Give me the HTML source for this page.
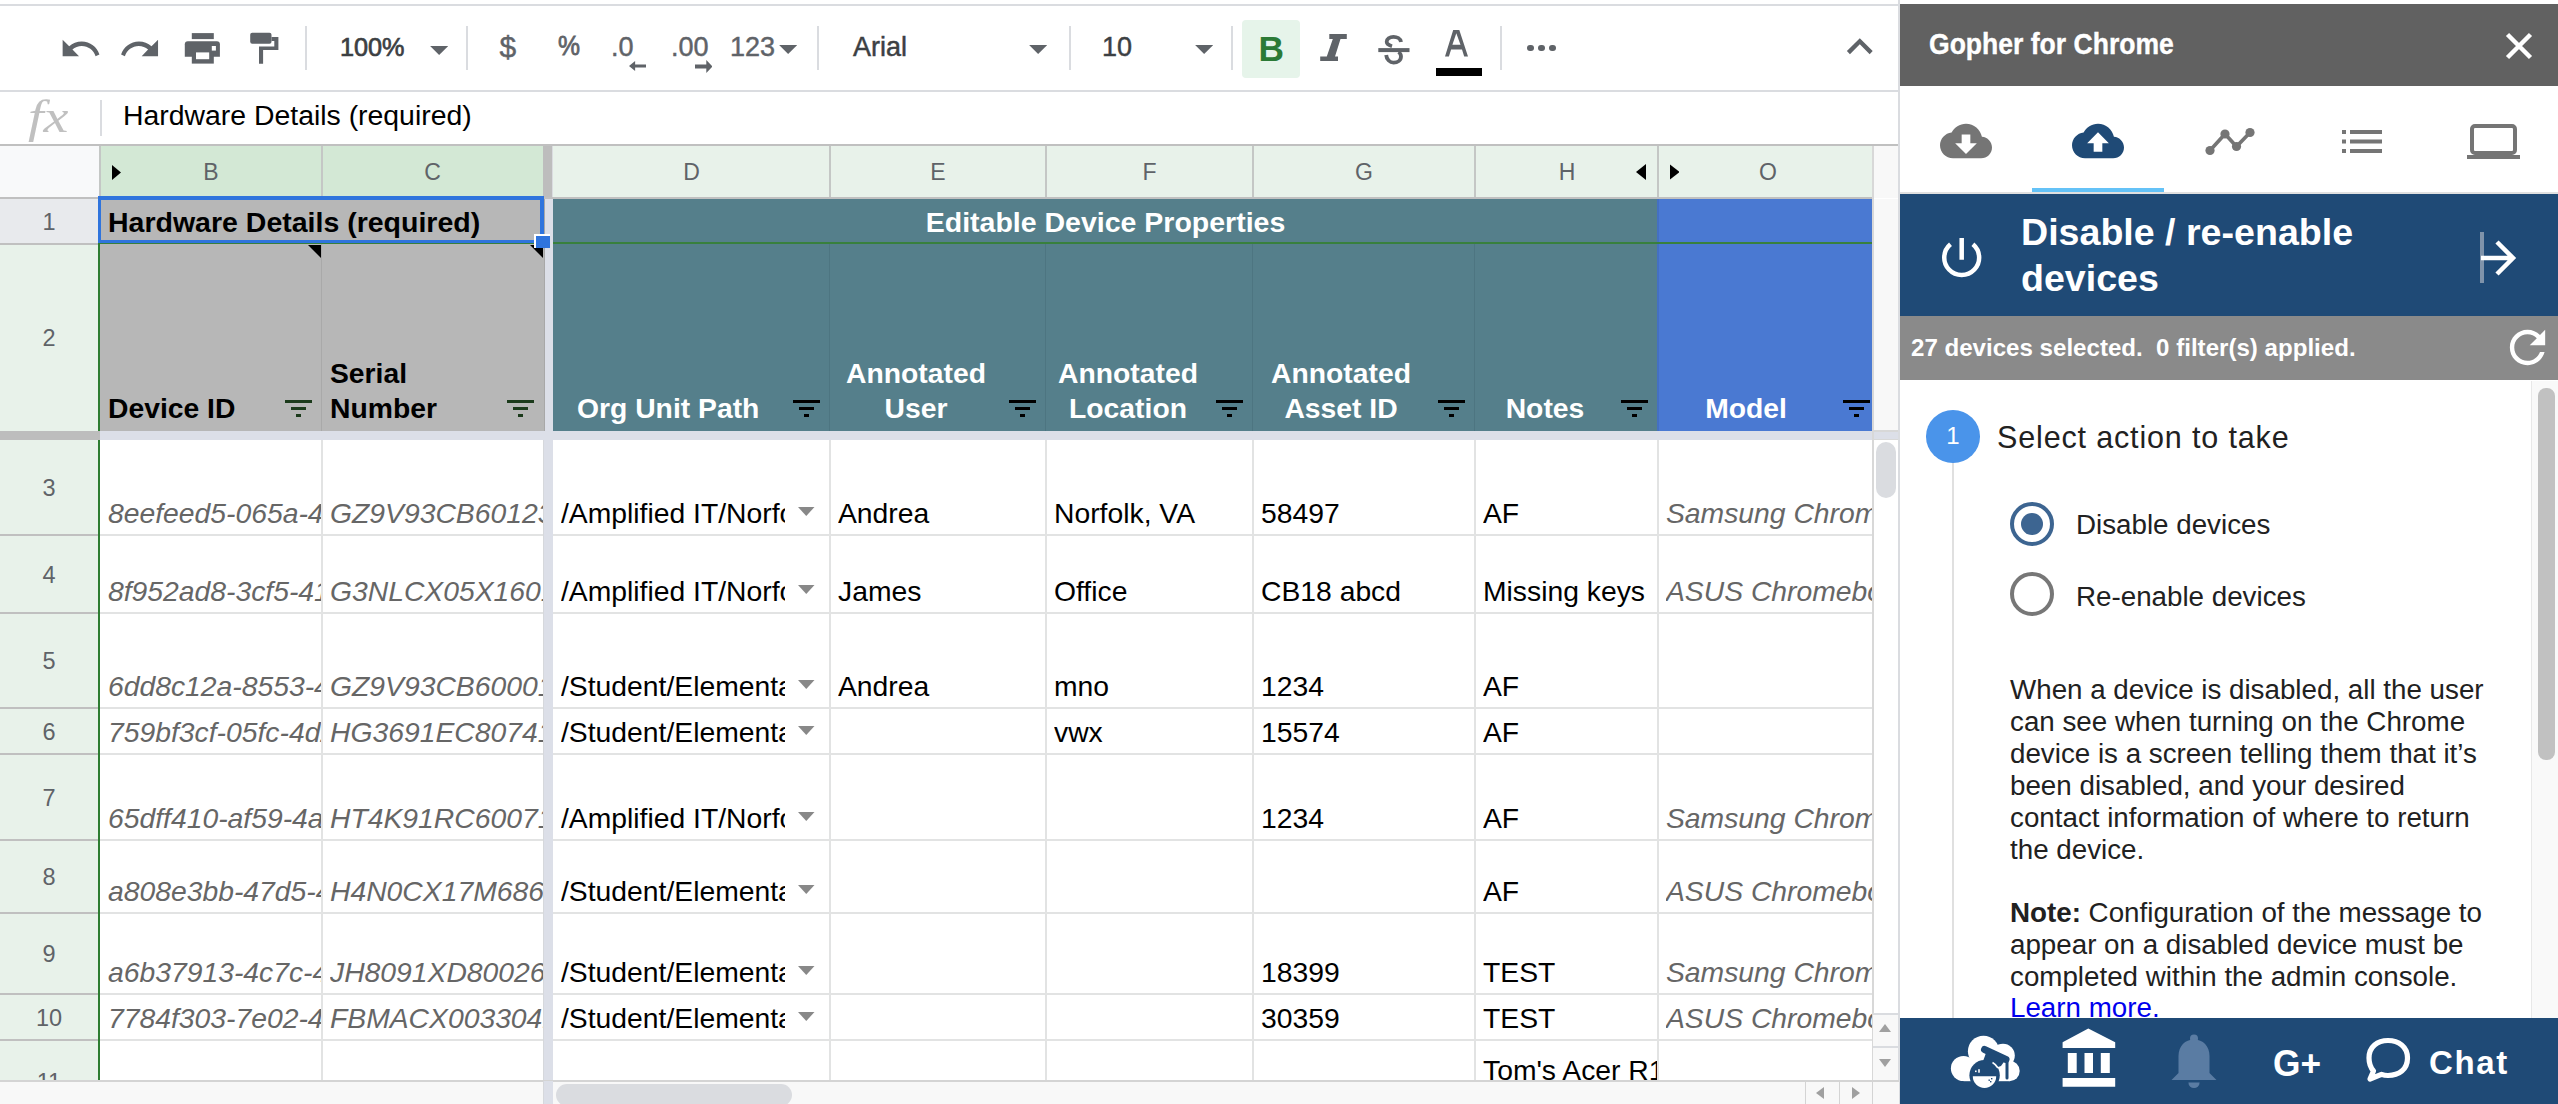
<!DOCTYPE html><html><head><meta charset="utf-8"><style>
html,body{margin:0;padding:0;}
body{width:2558px;height:1104px;overflow:hidden;position:relative;background:#fff;font-family:"Liberation Sans", sans-serif;}
div{box-sizing:border-box;}
.t{position:absolute;white-space:nowrap;line-height:1;}
.clip{position:absolute;overflow:hidden;}
svg{position:absolute;display:block;}

</style></head><body>
<div style="position:absolute;left:0px;top:4px;width:1899px;height:2px;background:#dadce0"></div>
<div style="position:absolute;left:0px;top:90px;width:1899px;height:2px;background:#dadce0"></div>
<svg style="left:58.6px;top:27.2px" width="43.7" height="43.7" viewBox="0 0 24 24"><path fill="#5f6368" d="M12.5 8c-2.65 0-5.05.99-6.9 2.6L2 7v9h9l-3.62-3.62c1.39-1.16 3.16-1.88 5.12-1.88 3.54 0 6.55 2.31 7.6 5.5l2.1-.85C20.9 11 17.15 8 12.5 8z"/></svg>
<svg style="left:118.4px;top:26.7px" width="43.7" height="43.7" viewBox="0 0 24 24"><path fill="#5f6368" d="M18.4 10.6C16.55 8.99 14.15 8 11.5 8c-4.65 0-8.4 3-9.8 7.15l2.1.85c1.05-3.19 4.05-5.5 7.6-5.5 1.95 0 3.73.72 5.12 1.88L13 16h9V7l-3.6 3.6z"/></svg>
<svg style="left:182px;top:30px" width="40" height="36" viewBox="0 0 40 36"><g fill="#5f6368"><rect x="9.8" y="3.1" width="22" height="6"/><path d="M2.8 14.2Q2.8 11.2 5.8 11.2H34.9Q37.9 11.2 37.9 14.2V26.7H2.8z"/><rect x="9.8" y="22.1" width="22" height="11.5"/></g><g fill="#fff"><rect x="14" y="22.4" width="13.2" height="6.8"/><rect x="29.8" y="16" width="4.1" height="4.6"/></g></svg>
<svg style="left:248px;top:30px" width="34" height="36" viewBox="0 0 34 36"><g fill="#5f6368"><rect x="2.2" y="2.8" width="21.3" height="10.9" rx="2"/><path d="M23.5 7H30.4V20H15.1V33.8H11V16.5H26.3V11H23.5z"/></g></svg>
<div style="position:absolute;left:305px;top:26px;width:2px;height:44px;background:#dadce0"></div>
<div style="position:absolute;left:466px;top:26px;width:2px;height:44px;background:#dadce0"></div>
<div style="position:absolute;left:817px;top:26px;width:2px;height:44px;background:#dadce0"></div>
<div style="position:absolute;left:1069px;top:26px;width:2px;height:44px;background:#dadce0"></div>
<div style="position:absolute;left:1231px;top:26px;width:2px;height:44px;background:#dadce0"></div>
<div style="position:absolute;left:1500px;top:26px;width:2px;height:44px;background:#dadce0"></div>
<div style="position:absolute;left:340px;top:33px;white-space:nowrap;font-size:26.3px;color:#3c4043;transform:scaleX(0.96);transform-origin:0 0;line-height:28px;-webkit-text-stroke:0.45px currentColor;-webkit-text-stroke:0.7px #3c4043">100%</div>
<svg style="left:430px;top:45.6px" width="18.3" height="9" viewBox="0 0 10 5"><path fill="#5f6368" d="M0 0h10L5 5z"/></svg>
<div style="position:absolute;left:499.5px;top:33px;white-space:nowrap;font-size:30px;color:#5f6368;line-height:28px;-webkit-text-stroke:0.45px currentColor">$</div>
<div style="position:absolute;left:557.5px;top:32px;white-space:nowrap;font-size:27.5px;color:#5f6368;transform:scaleX(0.9);transform-origin:0 0;line-height:28px;-webkit-text-stroke:0.45px currentColor;-webkit-text-stroke:0.8px #5f6368">%</div>
<div style="position:absolute;left:611px;top:33px;white-space:nowrap;font-size:27px;color:#5f6368;line-height:28px;-webkit-text-stroke:0.45px currentColor">.0</div>
<svg style="left:628.8px;top:61.3px" width="17.5" height="10" viewBox="0 0 20 13" preserveAspectRatio="none"><path fill="#5f6368" d="M7 0L0 6.5 7 13V8.5h13v-4H7z"/></svg>
<div style="position:absolute;left:671px;top:33px;white-space:nowrap;font-size:27px;color:#5f6368;line-height:28px;-webkit-text-stroke:0.45px currentColor">.00</div>
<svg style="left:694.6px;top:59.5px" width="17.4" height="13" viewBox="0 0 20 13" preserveAspectRatio="none"><path fill="#5f6368" d="M13 0l7 6.5L13 13V8.5H0v-4h13z"/></svg>
<div style="position:absolute;left:730px;top:33px;white-space:nowrap;font-size:27px;color:#5f6368;line-height:28px;-webkit-text-stroke:0.45px currentColor">123</div>
<svg style="left:779px;top:44.5px" width="18.3" height="9" viewBox="0 0 10 5"><path fill="#5f6368" d="M0 0h10L5 5z"/></svg>
<div style="position:absolute;left:853px;top:33px;white-space:nowrap;font-size:27px;color:#3c4043;line-height:28px;-webkit-text-stroke:0.45px currentColor">Arial</div>
<svg style="left:1029px;top:44.5px" width="18.3" height="9" viewBox="0 0 10 5"><path fill="#5f6368" d="M0 0h10L5 5z"/></svg>
<div style="position:absolute;left:1102px;top:33px;white-space:nowrap;font-size:27px;color:#3c4043;line-height:28px;-webkit-text-stroke:0.45px currentColor">10</div>
<svg style="left:1195px;top:45px" width="18.3" height="9" viewBox="0 0 10 5"><path fill="#5f6368" d="M0 0h10L5 5z"/></svg>
<div style="position:absolute;left:1242px;top:20px;width:58px;height:58px;background:#e6f4ea;border-radius:4px"></div>
<div class="t" style="left:1258.5px;top:31.32px;font-size:35.3px;color:#2b7a36;font-weight:bold">B</div>
<svg style="left:1318px;top:32px" width="32" height="32" viewBox="0 0 32 32"><path fill="#5f6368" d="M11.3 2.1H28.8V7H22.5L17 24.5H20V28.9H2.2V24.5H8.8L14.8 7H11.3z"/></svg>
<svg style="left:1376px;top:32px" width="36" height="34" viewBox="0 0 36 34"><g fill="none" stroke="#5f6368" stroke-width="3.8"><path d="M25 10C24.5 6.5 21 4.9 17.5 4.9C13.5 4.9 10.7 7 10.7 9.8C10.7 12.3 13 13.3 16 14.2"/><path d="M10.2 23C10.5 27.5 14 30.6 17.6 30.6C21.5 30.6 25 28.5 25 24.5C25 22.5 24 21 22.5 20"/></g><rect x="2.3" y="16.1" width="31.2" height="4" fill="#5f6368"/></svg>
<svg style="left:1440px;top:28px" width="34" height="32" viewBox="0 0 34 32"><path fill="#5f6368" fill-rule="evenodd" d="M13.2 2H19.3L28 28.5H24.2L22 21.4H11.1L8.9 28.5H5zM12.4 16.8H20.5L16.3 5.3z"/></svg>
<div style="position:absolute;left:1436px;top:68px;width:46px;height:8px;background:#000"></div>
<div style="position:absolute;left:1527px;top:44.7px;width:6.8px;height:6.8px;background:#5f6368;border-radius:50%"></div>
<div style="position:absolute;left:1538px;top:44.7px;width:6.8px;height:6.8px;background:#5f6368;border-radius:50%"></div>
<div style="position:absolute;left:1549px;top:44.7px;width:6.8px;height:6.8px;background:#5f6368;border-radius:50%"></div>
<svg style="left:1834.2px;top:21.4px" width="51.6" height="51.6" viewBox="0 0 24 24"><path fill="#5f6368" d="M12 8l-6 6 1.41 1.41L12 10.83l4.59 4.58L18 14z"/></svg>
<div style="position:absolute;left:28px;top:91.5px;white-space:nowrap;font-family:'Liberation Serif',serif;font-size:46px;color:#c0c0c0;line-height:50px;transform:scaleX(1.22);transform-origin:0 0"><i>fx</i></div>
<div style="position:absolute;left:100px;top:100px;width:2px;height:36px;background:#dadce0"></div>
<div style="position:absolute;left:123px;top:99px;white-space:nowrap;font-size:28.4px;color:#000;line-height:32px">Hardware Details (required)</div>
<div style="position:absolute;left:0px;top:144px;width:1899px;height:2px;background:#c0c0c0"></div>
<div style="position:absolute;left:0px;top:146px;width:100px;height:52px;background:#f8f9fa"></div>
<div style="position:absolute;left:100px;top:146px;width:443px;height:52px;background:#d3e8d5"></div>
<div style="position:absolute;left:543px;top:146px;width:9px;height:52px;background:#bdbdbd"></div>
<div style="position:absolute;left:552px;top:146px;width:1px;height:52px;background:#dadce0"></div>
<div style="position:absolute;left:553px;top:146px;width:1320px;height:52px;background:#e8f2ea"></div>
<div style="position:absolute;left:1873px;top:146px;width:26px;height:52px;background:#f8f8f8"></div>
<div style="position:absolute;left:99px;top:146px;width:2px;height:52px;background:#c4c7c5"></div>
<div style="position:absolute;left:321px;top:146px;width:2px;height:52px;background:#c4c7c5"></div>
<div style="position:absolute;left:829px;top:146px;width:2px;height:52px;background:#c4c7c5"></div>
<div style="position:absolute;left:1045px;top:146px;width:2px;height:52px;background:#c4c7c5"></div>
<div style="position:absolute;left:1252px;top:146px;width:2px;height:52px;background:#c4c7c5"></div>
<div style="position:absolute;left:1474px;top:146px;width:2px;height:52px;background:#c4c7c5"></div>
<div style="position:absolute;left:1657px;top:146px;width:2px;height:52px;background:#c4c7c5"></div>
<div style="position:absolute;left:0px;top:197px;width:1873px;height:2px;background:#c0c0c0"></div>
<div class="t" style="left:171.0px;width:80px;top:161px;text-align:center;font-size:23px;color:#5f6368;line-height:23px">B</div>
<div class="t" style="left:392.5px;width:80px;top:161px;text-align:center;font-size:23px;color:#5f6368;line-height:23px">C</div>
<div class="t" style="left:651.5px;width:80px;top:161px;text-align:center;font-size:23px;color:#5f6368;line-height:23px">D</div>
<div class="t" style="left:898.0px;width:80px;top:161px;text-align:center;font-size:23px;color:#5f6368;line-height:23px">E</div>
<div class="t" style="left:1109.5px;width:80px;top:161px;text-align:center;font-size:23px;color:#5f6368;line-height:23px">F</div>
<div class="t" style="left:1324.0px;width:80px;top:161px;text-align:center;font-size:23px;color:#5f6368;line-height:23px">G</div>
<div class="t" style="left:1527px;width:80px;top:161px;text-align:center;font-size:23px;color:#5f6368;line-height:23px">H</div>
<div class="t" style="left:1728px;width:80px;top:161px;text-align:center;font-size:23px;color:#5f6368;line-height:23px">O</div>
<svg style="left:112px;top:165px" width="9" height="15" viewBox="0 0 10 16" preserveAspectRatio="none"><path fill="#000" d="M0 0l10 8-10 8z"/></svg>
<svg style="left:1636px;top:164px" width="10" height="16" viewBox="0 0 10 16"><path fill="#000" d="M10 0L0 8l10 8z"/></svg>
<svg style="left:1669.5px;top:164px" width="9.5" height="16" viewBox="0 0 10 16"><path fill="#000" d="M0 0l10 8-10 8z"/></svg>
<div style="position:absolute;left:0px;top:199px;width:100px;height:44px;background:#e8eaed"></div>
<div style="position:absolute;left:0px;top:243px;width:100px;height:188px;background:#e8f2ea"></div>
<div style="position:absolute;left:0px;top:243px;width:98px;height:2px;background:#c0c0c0"></div>
<div class="t" style="left:0;width:98px;text-align:center;top:211px;font-size:23.5px;color:#5f6368;line-height:23px">1</div>
<div class="t" style="left:0;width:98px;text-align:center;top:327px;font-size:23.5px;color:#5f6368;line-height:23px">2</div>
<div style="position:absolute;left:100px;top:199px;width:444px;height:232px;background:#b7b7b7"></div>
<div style="position:absolute;left:544px;top:199px;width:1px;height:232px;background:#a8a8a8"></div>
<div style="position:absolute;left:321px;top:243px;width:1px;height:188px;background:#a9a9a9"></div>
<div style="position:absolute;left:545px;top:199px;width:8px;height:241px;background:#dcdfe8"></div>
<div style="position:absolute;left:553px;top:199px;width:1105px;height:232px;background:#557f8b"></div>
<div style="position:absolute;left:1658px;top:199px;width:215px;height:232px;background:#4a79d2"></div>
<div style="position:absolute;left:829px;top:244px;width:1px;height:187px;background:#4d7581"></div>
<div style="position:absolute;left:1045px;top:244px;width:1px;height:187px;background:#4d7581"></div>
<div style="position:absolute;left:1252px;top:244px;width:1px;height:187px;background:#4d7581"></div>
<div style="position:absolute;left:1474px;top:244px;width:1px;height:187px;background:#4d7581"></div>
<div style="position:absolute;left:1657px;top:199px;width:2px;height:232px;background:#4470c2"></div>
<div style="position:absolute;left:553px;top:242px;width:1320px;height:2px;background:#38803d"></div>
<div style="position:absolute;left:98px;top:242px;width:447px;height:2px;background:#38803d"></div>
<div style="position:absolute;left:98px;top:243px;width:2px;height:188px;background:#2e7d32"></div>
<div style="position:absolute;left:108px;top:204.6px;white-space:nowrap;font-size:28.5px;font-weight:bold;color:#000;line-height:34px">Hardware Details (required)</div>
<div class="t" style="left:553px;width:1105px;text-align:center;top:204.6px;font-size:28.5px;font-weight:bold;color:#fff;line-height:34px">Editable Device Properties</div>
<div style="position:absolute;left:108px;top:391px;white-space:nowrap;font-size:28.3px;font-weight:bold;line-height:35px;color:#000">Device ID</div>
<div style="position:absolute;left:330px;top:356px;white-space:nowrap;font-size:28.3px;font-weight:bold;line-height:35px;color:#000">Serial<br>Number</div>
<div style="position:absolute;left:577px;top:391px;white-space:nowrap;font-size:28.3px;font-weight:bold;line-height:35px;color:#fff">Org Unit Path</div>
<div class="t" style="left:830px;width:172px;text-align:center;top:356px;font-size:28.3px;font-weight:bold;line-height:35px;color:#fff">Annotated<br>User</div>
<div class="t" style="left:1046px;width:164px;text-align:center;top:356px;font-size:28.3px;font-weight:bold;line-height:35px;color:#fff">Annotated<br>Location</div>
<div class="t" style="left:1253px;width:176px;text-align:center;top:356px;font-size:28.3px;font-weight:bold;line-height:35px;color:#fff">Annotated<br>Asset ID</div>
<div class="t" style="left:1475px;width:140px;text-align:center;top:391px;font-size:28.3px;font-weight:bold;line-height:35px;color:#fff">Notes</div>
<div class="t" style="left:1658px;width:176px;text-align:center;top:391px;font-size:28.3px;font-weight:bold;line-height:35px;color:#fff">Model</div>
<div style="position:absolute;left:285px;top:400px;width:27px;height:3px;background:#1b3a1b"></div><div style="position:absolute;left:291px;top:407px;width:15px;height:3px;background:#1b3a1b"></div><div style="position:absolute;left:296px;top:414px;width:5px;height:3px;background:#1b3a1b"></div>
<div style="position:absolute;left:507px;top:400px;width:27px;height:3px;background:#1b3a1b"></div><div style="position:absolute;left:513px;top:407px;width:15px;height:3px;background:#1b3a1b"></div><div style="position:absolute;left:518px;top:414px;width:5px;height:3px;background:#1b3a1b"></div>
<div style="position:absolute;left:793px;top:400px;width:27px;height:3px;background:#000"></div><div style="position:absolute;left:799px;top:407px;width:15px;height:3px;background:#000"></div><div style="position:absolute;left:804px;top:414px;width:5px;height:3px;background:#000"></div>
<div style="position:absolute;left:1009px;top:400px;width:27px;height:3px;background:#000"></div><div style="position:absolute;left:1015px;top:407px;width:15px;height:3px;background:#000"></div><div style="position:absolute;left:1020px;top:414px;width:5px;height:3px;background:#000"></div>
<div style="position:absolute;left:1216px;top:400px;width:27px;height:3px;background:#000"></div><div style="position:absolute;left:1222px;top:407px;width:15px;height:3px;background:#000"></div><div style="position:absolute;left:1227px;top:414px;width:5px;height:3px;background:#000"></div>
<div style="position:absolute;left:1438px;top:400px;width:27px;height:3px;background:#000"></div><div style="position:absolute;left:1444px;top:407px;width:15px;height:3px;background:#000"></div><div style="position:absolute;left:1449px;top:414px;width:5px;height:3px;background:#000"></div>
<div style="position:absolute;left:1621px;top:400px;width:27px;height:3px;background:#000"></div><div style="position:absolute;left:1627px;top:407px;width:15px;height:3px;background:#000"></div><div style="position:absolute;left:1632px;top:414px;width:5px;height:3px;background:#000"></div>
<div style="position:absolute;left:1843px;top:400px;width:27px;height:3px;background:#000"></div><div style="position:absolute;left:1849px;top:407px;width:15px;height:3px;background:#000"></div><div style="position:absolute;left:1854px;top:414px;width:5px;height:3px;background:#000"></div>
<svg style="left:308px;top:245px" width="13" height="13" viewBox="0 0 13 13"><path fill="#000" d="M0 0h13v13z"/></svg>
<svg style="left:530px;top:245px" width="13" height="13" viewBox="0 0 13 13"><path fill="#000" d="M0 0h13v13z"/></svg>
<div style="position:absolute;left:98px;top:196px;width:446px;height:4px;background:#2f74dd"></div>
<div style="position:absolute;left:98px;top:196px;width:3px;height:47px;background:#2f74dd"></div>
<div style="position:absolute;left:540px;top:196px;width:4px;height:47px;background:#2f74dd"></div>
<div style="position:absolute;left:98px;top:240px;width:446px;height:3px;background:#2f74dd"></div>
<div style="position:absolute;left:534px;top:234px;width:16px;height:14px;background:#fff"></div>
<div style="position:absolute;left:536px;top:236px;width:14px;height:12px;background:#2f74dd"></div>
<div style="position:absolute;left:0px;top:431px;width:100px;height:9px;background:#bdbdbd"></div>
<div style="position:absolute;left:100px;top:431px;width:1773px;height:9px;background:#dcdfe8"></div>
<div style="position:absolute;left:0px;top:440px;width:98px;height:641px;background:#e8f2ea"></div>
<div style="position:absolute;left:98px;top:440px;width:2px;height:641px;background:#2e7d32"></div>
<div style="position:absolute;left:0px;top:534px;width:98px;height:2px;background:#c0c0c0"></div>
<div style="position:absolute;left:100px;top:534px;width:443px;height:2px;background:#e2e3e3"></div>
<div style="position:absolute;left:553px;top:534px;width:1320px;height:2px;background:#e2e3e3"></div>
<div class="t" style="left:0;width:98px;text-align:center;top:477.0px;font-size:23.5px;color:#5f6368;line-height:23px">3</div>
<div style="position:absolute;left:0px;top:612px;width:98px;height:2px;background:#c0c0c0"></div>
<div style="position:absolute;left:100px;top:612px;width:443px;height:2px;background:#e2e3e3"></div>
<div style="position:absolute;left:553px;top:612px;width:1320px;height:2px;background:#e2e3e3"></div>
<div class="t" style="left:0;width:98px;text-align:center;top:563.5px;font-size:23.5px;color:#5f6368;line-height:23px">4</div>
<div style="position:absolute;left:0px;top:707px;width:98px;height:2px;background:#c0c0c0"></div>
<div style="position:absolute;left:100px;top:707px;width:443px;height:2px;background:#e2e3e3"></div>
<div style="position:absolute;left:553px;top:707px;width:1320px;height:2px;background:#e2e3e3"></div>
<div class="t" style="left:0;width:98px;text-align:center;top:650.0px;font-size:23.5px;color:#5f6368;line-height:23px">5</div>
<div style="position:absolute;left:0px;top:753px;width:98px;height:2px;background:#c0c0c0"></div>
<div style="position:absolute;left:100px;top:753px;width:443px;height:2px;background:#e2e3e3"></div>
<div style="position:absolute;left:553px;top:753px;width:1320px;height:2px;background:#e2e3e3"></div>
<div class="t" style="left:0;width:98px;text-align:center;top:720.5px;font-size:23.5px;color:#5f6368;line-height:23px">6</div>
<div style="position:absolute;left:0px;top:839px;width:98px;height:2px;background:#c0c0c0"></div>
<div style="position:absolute;left:100px;top:839px;width:443px;height:2px;background:#e2e3e3"></div>
<div style="position:absolute;left:553px;top:839px;width:1320px;height:2px;background:#e2e3e3"></div>
<div class="t" style="left:0;width:98px;text-align:center;top:786.5px;font-size:23.5px;color:#5f6368;line-height:23px">7</div>
<div style="position:absolute;left:0px;top:912px;width:98px;height:2px;background:#c0c0c0"></div>
<div style="position:absolute;left:100px;top:912px;width:443px;height:2px;background:#e2e3e3"></div>
<div style="position:absolute;left:553px;top:912px;width:1320px;height:2px;background:#e2e3e3"></div>
<div class="t" style="left:0;width:98px;text-align:center;top:866.0px;font-size:23.5px;color:#5f6368;line-height:23px">8</div>
<div style="position:absolute;left:0px;top:993px;width:98px;height:2px;background:#c0c0c0"></div>
<div style="position:absolute;left:100px;top:993px;width:443px;height:2px;background:#e2e3e3"></div>
<div style="position:absolute;left:553px;top:993px;width:1320px;height:2px;background:#e2e3e3"></div>
<div class="t" style="left:0;width:98px;text-align:center;top:943.0px;font-size:23.5px;color:#5f6368;line-height:23px">9</div>
<div style="position:absolute;left:0px;top:1039px;width:98px;height:2px;background:#c0c0c0"></div>
<div style="position:absolute;left:100px;top:1039px;width:443px;height:2px;background:#e2e3e3"></div>
<div style="position:absolute;left:553px;top:1039px;width:1320px;height:2px;background:#e2e3e3"></div>
<div class="t" style="left:0;width:98px;text-align:center;top:1006.5px;font-size:23.5px;color:#5f6368;line-height:23px">10</div>
<div style="position:absolute;left:0px;top:1080px;width:98px;height:2px;background:#c0c0c0"></div>
<div style="position:absolute;left:100px;top:1080px;width:443px;height:2px;background:#e2e3e3"></div>
<div style="position:absolute;left:553px;top:1080px;width:1320px;height:2px;background:#e2e3e3"></div>
<div class="clip" style="left:0;top:1040px;width:98px;height:40px"><div class="t" style="left:0;width:98px;text-align:center;top:1049.0px;font-size:23.5px;color:#5f6368;line-height:23px"></div></div>
<div class="clip" style="left:0;top:1041px;width:98px;height:39px"><div class="t" style="left:0;width:98px;text-align:center;top:30px;font-size:23.5px;color:#5f6368;line-height:23px">11</div></div>
<div style="position:absolute;left:321px;top:440px;width:2px;height:641px;background:#e2e3e3"></div>
<div style="position:absolute;left:829px;top:440px;width:2px;height:641px;background:#e2e3e3"></div>
<div style="position:absolute;left:1045px;top:440px;width:2px;height:641px;background:#e2e3e3"></div>
<div style="position:absolute;left:1252px;top:440px;width:2px;height:641px;background:#e2e3e3"></div>
<div style="position:absolute;left:1474px;top:440px;width:2px;height:641px;background:#e2e3e3"></div>
<div style="position:absolute;left:1657px;top:440px;width:2px;height:641px;background:#e2e3e3"></div>
<div style="position:absolute;left:543px;top:440px;width:1px;height:641px;background:#d6d8dc"></div>
<div style="position:absolute;left:544px;top:440px;width:9px;height:641px;background:#dcdfe8"></div>
<div style="position:absolute;left:1872px;top:146px;width:2px;height:935px;background:#d8d8d8"></div>
<div style="position:absolute;left:1874px;top:199px;width:24px;height:232px;background:#f8f8f8"></div>
<div style="position:absolute;left:1874px;top:430px;width:24px;height:10px;background:#dcdfe8;border-top:2px solid #d8d8d8;border-bottom:1px solid #d8d8d8"></div>
<div class="clip" style="left:108px;top:441px;width:213px;height:93px"><div class="t" style="left:0px;top:58.04px;font-size:28.3px;font-style:italic;color:#666">8eefeed5-065a-4d2c</div></div>
<div class="clip" style="left:330px;top:441px;width:213px;height:93px"><div class="t" style="left:0px;top:58.04px;font-size:28.3px;font-style:italic;color:#666">GZ9V93CB601234</div></div>
<div class="clip" style="left:561px;top:441px;width:224px;height:93px"><div class="t" style="left:0px;top:58.04px;font-size:28.3px;color:#000">/Amplified IT/Norfolk</div></div>
<div class="clip" style="left:838px;top:441px;width:207px;height:93px"><div class="t" style="left:0px;top:58.04px;font-size:28.3px;color:#000">Andrea</div></div>
<div class="clip" style="left:1054px;top:441px;width:198px;height:93px"><div class="t" style="left:0px;top:58.04px;font-size:28.3px;color:#000">Norfolk, VA</div></div>
<div class="clip" style="left:1261px;top:441px;width:213px;height:93px"><div class="t" style="left:0px;top:58.04px;font-size:28.3px;color:#000">58497</div></div>
<div class="clip" style="left:1483px;top:441px;width:174px;height:93px"><div class="t" style="left:0px;top:58.04px;font-size:28.3px;color:#000">AF</div></div>
<div class="clip" style="left:1666px;top:441px;width:206px;height:93px"><div class="t" style="left:0px;top:58.04px;font-size:28.3px;font-style:italic;color:#666">Samsung Chromebook</div></div>
<svg style="left:798.4px;top:506.6px" width="16.5" height="9" viewBox="0 0 10 5.5" preserveAspectRatio="none"><path fill="#888" d="M0 0h10L5 5.5z"/></svg>
<div class="clip" style="left:108px;top:536px;width:213px;height:76px"><div class="t" style="left:0px;top:41.04px;font-size:28.3px;font-style:italic;color:#666">8f952ad8-3cf5-41ab</div></div>
<div class="clip" style="left:330px;top:536px;width:213px;height:76px"><div class="t" style="left:0px;top:41.04px;font-size:28.3px;font-style:italic;color:#666">G3NLCX05X16012</div></div>
<div class="clip" style="left:561px;top:536px;width:224px;height:76px"><div class="t" style="left:0px;top:41.04px;font-size:28.3px;color:#000">/Amplified IT/Norfolk</div></div>
<div class="clip" style="left:838px;top:536px;width:207px;height:76px"><div class="t" style="left:0px;top:41.04px;font-size:28.3px;color:#000">James</div></div>
<div class="clip" style="left:1054px;top:536px;width:198px;height:76px"><div class="t" style="left:0px;top:41.04px;font-size:28.3px;color:#000">Office</div></div>
<div class="clip" style="left:1261px;top:536px;width:213px;height:76px"><div class="t" style="left:0px;top:41.04px;font-size:28.3px;color:#000">CB18 abcd</div></div>
<div class="clip" style="left:1483px;top:536px;width:174px;height:76px"><div class="t" style="left:0px;top:41.04px;font-size:28.3px;color:#000">Missing keys</div></div>
<div class="clip" style="left:1666px;top:536px;width:206px;height:76px"><div class="t" style="left:0px;top:41.04px;font-size:28.3px;font-style:italic;color:#666">ASUS Chromebook</div></div>
<svg style="left:798.4px;top:584.6px" width="16.5" height="9" viewBox="0 0 10 5.5" preserveAspectRatio="none"><path fill="#888" d="M0 0h10L5 5.5z"/></svg>
<div class="clip" style="left:108px;top:614px;width:213px;height:93px"><div class="t" style="left:0px;top:58.04px;font-size:28.3px;font-style:italic;color:#666">6dd8c12a-8553-4c1e</div></div>
<div class="clip" style="left:330px;top:614px;width:213px;height:93px"><div class="t" style="left:0px;top:58.04px;font-size:28.3px;font-style:italic;color:#666">GZ9V93CB600012</div></div>
<div class="clip" style="left:561px;top:614px;width:224px;height:93px"><div class="t" style="left:0px;top:58.04px;font-size:28.3px;color:#000">/Student/Elementary</div></div>
<div class="clip" style="left:838px;top:614px;width:207px;height:93px"><div class="t" style="left:0px;top:58.04px;font-size:28.3px;color:#000">Andrea</div></div>
<div class="clip" style="left:1054px;top:614px;width:198px;height:93px"><div class="t" style="left:0px;top:58.04px;font-size:28.3px;color:#000">mno</div></div>
<div class="clip" style="left:1261px;top:614px;width:213px;height:93px"><div class="t" style="left:0px;top:58.04px;font-size:28.3px;color:#000">1234</div></div>
<div class="clip" style="left:1483px;top:614px;width:174px;height:93px"><div class="t" style="left:0px;top:58.04px;font-size:28.3px;color:#000">AF</div></div>
<svg style="left:798.4px;top:679.6px" width="16.5" height="9" viewBox="0 0 10 5.5" preserveAspectRatio="none"><path fill="#888" d="M0 0h10L5 5.5z"/></svg>
<div class="clip" style="left:108px;top:709px;width:213px;height:44px"><div class="t" style="left:0px;top:9.04px;font-size:28.3px;font-style:italic;color:#666">759bf3cf-05fc-4d2a</div></div>
<div class="clip" style="left:330px;top:709px;width:213px;height:44px"><div class="t" style="left:0px;top:9.04px;font-size:28.3px;font-style:italic;color:#666">HG3691EC807412</div></div>
<div class="clip" style="left:561px;top:709px;width:224px;height:44px"><div class="t" style="left:0px;top:9.04px;font-size:28.3px;color:#000">/Student/Elementary</div></div>
<div class="clip" style="left:1054px;top:709px;width:198px;height:44px"><div class="t" style="left:0px;top:9.04px;font-size:28.3px;color:#000">vwx</div></div>
<div class="clip" style="left:1261px;top:709px;width:213px;height:44px"><div class="t" style="left:0px;top:9.04px;font-size:28.3px;color:#000">15574</div></div>
<div class="clip" style="left:1483px;top:709px;width:174px;height:44px"><div class="t" style="left:0px;top:9.04px;font-size:28.3px;color:#000">AF</div></div>
<svg style="left:798.4px;top:725.6px" width="16.5" height="9" viewBox="0 0 10 5.5" preserveAspectRatio="none"><path fill="#888" d="M0 0h10L5 5.5z"/></svg>
<div class="clip" style="left:108px;top:755px;width:213px;height:84px"><div class="t" style="left:0px;top:49.04px;font-size:28.3px;font-style:italic;color:#666">65dff410-af59-4a1b</div></div>
<div class="clip" style="left:330px;top:755px;width:213px;height:84px"><div class="t" style="left:0px;top:49.04px;font-size:28.3px;font-style:italic;color:#666">HT4K91RC600712</div></div>
<div class="clip" style="left:561px;top:755px;width:224px;height:84px"><div class="t" style="left:0px;top:49.04px;font-size:28.3px;color:#000">/Amplified IT/Norfolk</div></div>
<div class="clip" style="left:1261px;top:755px;width:213px;height:84px"><div class="t" style="left:0px;top:49.04px;font-size:28.3px;color:#000">1234</div></div>
<div class="clip" style="left:1483px;top:755px;width:174px;height:84px"><div class="t" style="left:0px;top:49.04px;font-size:28.3px;color:#000">AF</div></div>
<div class="clip" style="left:1666px;top:755px;width:206px;height:84px"><div class="t" style="left:0px;top:49.04px;font-size:28.3px;font-style:italic;color:#666">Samsung Chromebook</div></div>
<svg style="left:798.4px;top:811.6px" width="16.5" height="9" viewBox="0 0 10 5.5" preserveAspectRatio="none"><path fill="#888" d="M0 0h10L5 5.5z"/></svg>
<div class="clip" style="left:108px;top:841px;width:213px;height:71px"><div class="t" style="left:0px;top:36.04px;font-size:28.3px;font-style:italic;color:#666">a808e3bb-47d5-4e2c</div></div>
<div class="clip" style="left:330px;top:841px;width:213px;height:71px"><div class="t" style="left:0px;top:36.04px;font-size:28.3px;font-style:italic;color:#666">H4N0CX17M68612</div></div>
<div class="clip" style="left:561px;top:841px;width:224px;height:71px"><div class="t" style="left:0px;top:36.04px;font-size:28.3px;color:#000">/Student/Elementary</div></div>
<div class="clip" style="left:1483px;top:841px;width:174px;height:71px"><div class="t" style="left:0px;top:36.04px;font-size:28.3px;color:#000">AF</div></div>
<div class="clip" style="left:1666px;top:841px;width:206px;height:71px"><div class="t" style="left:0px;top:36.04px;font-size:28.3px;font-style:italic;color:#666">ASUS Chromebook</div></div>
<svg style="left:798.4px;top:884.6px" width="16.5" height="9" viewBox="0 0 10 5.5" preserveAspectRatio="none"><path fill="#888" d="M0 0h10L5 5.5z"/></svg>
<div class="clip" style="left:108px;top:914px;width:213px;height:79px"><div class="t" style="left:0px;top:44.04px;font-size:28.3px;font-style:italic;color:#666">a6b37913-4c7c-4f1d</div></div>
<div class="clip" style="left:330px;top:914px;width:213px;height:79px"><div class="t" style="left:0px;top:44.04px;font-size:28.3px;font-style:italic;color:#666">JH8091XD800261</div></div>
<div class="clip" style="left:561px;top:914px;width:224px;height:79px"><div class="t" style="left:0px;top:44.04px;font-size:28.3px;color:#000">/Student/Elementary</div></div>
<div class="clip" style="left:1261px;top:914px;width:213px;height:79px"><div class="t" style="left:0px;top:44.04px;font-size:28.3px;color:#000">18399</div></div>
<div class="clip" style="left:1483px;top:914px;width:174px;height:79px"><div class="t" style="left:0px;top:44.04px;font-size:28.3px;color:#000">TEST</div></div>
<div class="clip" style="left:1666px;top:914px;width:206px;height:79px"><div class="t" style="left:0px;top:44.04px;font-size:28.3px;font-style:italic;color:#666">Samsung Chromebook</div></div>
<svg style="left:798.4px;top:965.6px" width="16.5" height="9" viewBox="0 0 10 5.5" preserveAspectRatio="none"><path fill="#888" d="M0 0h10L5 5.5z"/></svg>
<div class="clip" style="left:108px;top:995px;width:213px;height:44px"><div class="t" style="left:0px;top:9.04px;font-size:28.3px;font-style:italic;color:#666">7784f303-7e02-4b1a</div></div>
<div class="clip" style="left:330px;top:995px;width:213px;height:44px"><div class="t" style="left:0px;top:9.04px;font-size:28.3px;font-style:italic;color:#666">FBMACX00330412</div></div>
<div class="clip" style="left:561px;top:995px;width:224px;height:44px"><div class="t" style="left:0px;top:9.04px;font-size:28.3px;color:#000">/Student/Elementary</div></div>
<div class="clip" style="left:1261px;top:995px;width:213px;height:44px"><div class="t" style="left:0px;top:9.04px;font-size:28.3px;color:#000">30359</div></div>
<div class="clip" style="left:1483px;top:995px;width:174px;height:44px"><div class="t" style="left:0px;top:9.04px;font-size:28.3px;color:#000">TEST</div></div>
<div class="clip" style="left:1666px;top:995px;width:206px;height:44px"><div class="t" style="left:0px;top:9.04px;font-size:28.3px;font-style:italic;color:#666">ASUS Chromebook</div></div>
<svg style="left:798.4px;top:1011.6px" width="16.5" height="9" viewBox="0 0 10 5.5" preserveAspectRatio="none"><path fill="#888" d="M0 0h10L5 5.5z"/></svg>
<div class="clip" style="left:1483px;top:1041px;width:174px;height:39px"><div class="t" style="left:0px;top:15.04px;font-size:28.3px;color:#000">Tom's Acer R11</div></div>
<div style="position:absolute;left:1874px;top:440px;width:24px;height:641px;background:#fff"></div>
<div style="position:absolute;left:1876px;top:442px;width:20px;height:56px;background:#dadce0;border-radius:10px"></div>
<div style="position:absolute;left:1873px;top:1013px;width:26px;height:68px;background:#f8f8f8"></div>
<div style="position:absolute;left:1873px;top:1013px;width:26px;height:2px;background:#dadce0"></div>
<div style="position:absolute;left:1873px;top:1046px;width:26px;height:2px;background:#dadce0"></div>
<svg style="left:1879px;top:1024px" width="12" height="8" viewBox="0 0 12 8"><path fill="#a0a0a0" d="M0 8L6 0l6 8z"/></svg>
<svg style="left:1879px;top:1059px" width="12" height="8" viewBox="0 0 12 8"><path fill="#a0a0a0" d="M0 0l6 8 6-8z"/></svg>
<div style="position:absolute;left:1898px;top:0px;width:2px;height:1104px;background:#dadce0"></div>
<div style="position:absolute;left:0px;top:1081px;width:1899px;height:23px;background:#f8f8f8"></div>
<div style="position:absolute;left:0px;top:1080px;width:1899px;height:2px;background:#d4d4d4"></div>
<div style="position:absolute;left:543px;top:1081px;width:1px;height:23px;background:#d6d8dc"></div>
<div style="position:absolute;left:544px;top:1081px;width:9px;height:23px;background:#dcdfe8"></div>
<div style="position:absolute;left:556px;top:1084px;width:236px;height:22px;background:#dadce0;border-radius:11px"></div>
<div style="position:absolute;left:1805px;top:1082px;width:1px;height:22px;background:#d4d4d4"></div>
<div style="position:absolute;left:1839px;top:1082px;width:1px;height:22px;background:#d4d4d4"></div>
<div style="position:absolute;left:1872px;top:1082px;width:1px;height:22px;background:#d4d4d4"></div>
<svg style="left:1816px;top:1087px" width="8" height="12" viewBox="0 0 8 12"><path fill="#a0a0a0" d="M8 0L0 6l8 6z"/></svg>
<svg style="left:1852px;top:1087px" width="8" height="12" viewBox="0 0 8 12"><path fill="#a0a0a0" d="M0 0l8 6-8 6z"/></svg>
<div style="position:absolute;left:1900px;top:0px;width:658px;height:1104px;background:#fff"></div>
<div style="position:absolute;left:1900px;top:4px;width:658px;height:82px;background:#616161"></div>
<div class="t" style="left:1929px;top:28.61px;font-size:30px;font-weight:bold;color:#fff;transform:scaleX(0.885);transform-origin:0 0;-webkit-text-stroke:0.4px #fff">Gopher for Chrome</div>
<svg style="left:2502px;top:29px" width="34" height="34" viewBox="0 0 34 34"><path stroke="#fff" stroke-width="4.5" d="M5.5 5.5L28.5 28.5M28.5 5.5L5.5 28.5"/></svg>
<svg style="left:1940px;top:115px" width="52" height="52" viewBox="0 0 24 24"><path fill="#757575" d="M19.35 10.04C18.67 6.59 15.64 4 12 4 9.11 4 6.6 5.64 5.35 8.04 2.34 8.36 0 10.91 0 14c0 3.31 2.69 6 6 6h13c2.76 0 5-2.24 5-5 0-2.64-2.05-4.78-4.65-4.96zM17 13l-5 5-5-5h3V9h4v4h3z" fill-rule="evenodd"/></svg>
<svg style="left:2072px;top:115px" width="52" height="52" viewBox="0 0 24 24"><path fill="#1f4a76" d="M19.35 10.04C18.67 6.59 15.64 4 12 4 9.11 4 6.6 5.64 5.35 8.04 2.34 8.36 0 10.91 0 14c0 3.31 2.69 6 6 6h13c2.76 0 5-2.24 5-5 0-2.64-2.05-4.78-4.65-4.96zM14 13v4h-4v-4H7l5-5 5 5h-3z" fill-rule="evenodd"/></svg>
<svg style="left:2204px;top:126px" width="52" height="32" viewBox="0 0 52 32"><polyline fill="none" stroke="#757575" stroke-width="3.6" points="6,24.5 21,8 32.5,20.5 46,6.5"/><circle cx="6" cy="24.5" r="4.6" fill="#757575"/><circle cx="21" cy="8" r="4.6" fill="#757575"/><circle cx="32.5" cy="20.5" r="4.6" fill="#757575"/><circle cx="46" cy="6.5" r="4.6" fill="#757575"/></svg>
<svg style="left:2342px;top:130px" width="40" height="23" viewBox="0 0 40 23"><path fill="#757575" d="M0 0h4v4H0zM0 9.5h4v4H0zM0 19h4v4H0zM8 0h32v4H8zM8 9.5h32v4H8zM8 19h32v4H8z"/></svg>
<svg style="left:2467px;top:124px" width="53" height="36" viewBox="0 0 53 36"><rect x="5" y="2" width="43" height="27" rx="3" fill="none" stroke="#757575" stroke-width="4"/><rect x="0" y="31" width="53" height="4" fill="#757575"/></svg>
<div style="position:absolute;left:2032px;top:188px;width:132px;height:4px;background:#64c2f7"></div>
<div style="position:absolute;left:1900px;top:192px;width:658px;height:2px;background:#e0e0e0"></div>
<div style="position:absolute;left:1900px;top:194px;width:658px;height:122px;background:#1f4a76"></div>
<svg style="left:1937px;top:233px" width="50" height="50" viewBox="0 0 50 50"><path fill="none" stroke="#fff" stroke-width="4.5" d="M13.5 11.23A17.45 17.45 0 1 0 35.9 11.23M24.7 4.9V26.8"/></svg>
<div class="t" style="left:2021px;top:214.17px;font-size:37.6px;font-weight:bold;color:#fff">Disable / re-enable</div>
<div class="t" style="left:2021px;top:259.67px;font-size:37.6px;font-weight:bold;color:#fff">devices</div>
<div style="position:absolute;left:2480px;top:232px;width:4px;height:51px;background:#7f93aa"></div>
<svg style="left:2480px;top:238px" width="40" height="40" viewBox="0 0 40 40"><path fill="none" stroke="#fff" stroke-width="4.5" d="M1 20H33M17 4L33 20 17 36"/></svg>
<div style="position:absolute;left:1900px;top:316px;width:658px;height:64px;background:#8a8a8a"></div>
<div class="t" style="left:1911px;top:335.60px;font-size:24.1px;font-weight:bold;color:#fff">27 devices selected.&nbsp; 0 filter(s) applied.</div>
<svg style="left:2501px;top:321px" width="53" height="53" viewBox="0 0 24 24"><path fill="#fff" d="M17.65 6.35C16.2 4.9 14.21 4 12 4c-4.42 0-7.99 3.58-7.99 8s3.57 8 7.99 8c3.73 0 6.84-2.55 7.73-6h-2.08c-.82 2.33-3.04 4-5.65 4-3.31 0-6-2.69-6-6s2.69-6 6-6c1.66 0 3.14.69 4.22 1.78L13 11h7V4l-2.35 2.35z"/></svg>
<div style="position:absolute;left:2531px;top:381px;width:27px;height:637px;background:#f9f9f9;border-left:1px solid #e8e8e8"></div>
<div style="position:absolute;left:2538px;top:388px;width:17px;height:372px;background:#c1c1c1;border-radius:8px"></div>
<div style="position:absolute;left:1952px;top:462px;width:2px;height:556px;background:#e0e0e0"></div>
<div style="position:absolute;left:1926px;top:410px;width:54px;height:52.5px;background:#4a94ea;border-radius:50%"></div>
<div class="t" style="left:1926px;width:54px;text-align:center;top:424.2px;font-size:24px;color:#fff">1</div>
<div class="t" style="left:1997px;top:422.18px;font-size:30.5px;color:#212121;letter-spacing:0.85px">Select action to take</div>
<div style="position:absolute;left:2010px;top:502px;width:44px;height:44px;border:4px solid #3d6591;border-radius:50%"></div>
<div style="position:absolute;left:2021px;top:513px;width:22px;height:22px;background:#3d6591;border-radius:50%"></div>
<div class="t" style="left:2076px;top:510.51px;font-size:27.75px;color:#212121">Disable devices</div>
<div style="position:absolute;left:2010px;top:572px;width:44px;height:44px;border:4px solid #777;border-radius:50%"></div>
<div class="t" style="left:2076px;top:582.51px;font-size:27.75px;color:#212121">Re-enable devices</div>
<div class="t" style="left:2010px;top:676.11px;font-size:27.75px;color:#212121">When a device is disabled, all the user</div>
<div class="t" style="left:2010px;top:708.06px;font-size:27.75px;color:#212121">can see when turning on the Chrome</div>
<div class="t" style="left:2010px;top:740.01px;font-size:27.75px;color:#212121">device is a screen telling them that it&#8217;s</div>
<div class="t" style="left:2010px;top:771.96px;font-size:27.75px;color:#212121">been disabled, and your desired</div>
<div class="t" style="left:2010px;top:803.91px;font-size:27.75px;color:#212121">contact information of where to return</div>
<div class="t" style="left:2010px;top:835.86px;font-size:27.75px;color:#212121">the device.</div>
<div class="t" style="left:2010px;top:898.81px;font-size:27.75px;color:#212121"><b>Note:</b> Configuration of the message to</div>
<div class="t" style="left:2010px;top:930.76px;font-size:27.75px;color:#212121">appear on a disabled device must be</div>
<div class="t" style="left:2010px;top:962.71px;font-size:27.75px;color:#212121">completed within the admin console.</div>
<div class="clip" style="left:2000px;top:990px;width:300px;height:26.5px"><div class="t" style="left:10px;top:3.51px;font-size:27.75px;color:#0000ee"><span style="text-decoration:underline">Learn more.</span></div></div>
<div style="position:absolute;left:1900px;top:1018px;width:658px;height:86px;background:#1f4a76"></div>
<svg style="left:1940px;top:1024px" width="90" height="70" viewBox="0 0 90 70">
<g fill="#fff"><circle cx="23.5" cy="44.5" r="12.6"/><circle cx="43.5" cy="27.3" r="15.6"/><circle cx="63" cy="31.5" r="11.8"/><circle cx="69.5" cy="47" r="10.2"/><rect x="23.5" y="36" width="46" height="21.2"/></g>
<g fill="#1f4a76">
<path d="M44.5 25.5L66 35.5" stroke="#1f4a76" stroke-width="7" stroke-linecap="round"/>
<path d="M46 29L66 35 61 42 52 45 42 40z"/>
<circle cx="44.6" cy="51.2" r="15.2"/>
<path d="M67 35V54" stroke="#1f4a76" stroke-width="3" stroke-linecap="round"/>
</g>
<path fill="#fff" d="M32.8 52.2H56.2A11.7 11.7 0 0 1 32.8 52.2z"/>
<path fill="none" stroke="#fff" stroke-width="1.6" d="M52.5 38.5Q56 40.5 58 44"/>
<g fill="#fff"><rect x="35" y="46.5" width="1.6" height="1.6"/><rect x="38.2" y="45.2" width="1.6" height="3.5"/></g>
<g fill="#1f4a76"><rect x="48.5" y="55.5" width="1.4" height="1.4"/><rect x="51" y="54" width="1.4" height="1.4"/><rect x="50" y="57" width="1.4" height="1.4"/></g>
</svg>
<svg style="left:2062px;top:1028px" width="54" height="60" viewBox="0 0 54 60"><path fill="#fff" d="M26.3 0.6L53.2 14.2V20.1H0.6V14.2zM5.8 25h8.9v20H5.8zM22.5 25h8.5v20h-8.5zM38.8 25h9v20h-9zM0.6 49.9h52.6v8.9H0.6z"/></svg>
<svg style="left:2170px;top:1033px" width="48" height="57" viewBox="0 0 48 57"><g fill="#5a7ca3"><circle cx="24" cy="5.5" r="4"/><path d="M24 6.5C15 6.5 8.5 13 8.5 23V40L1.5 47H46.5L39.5 40V23C39.5 13 33 6.5 24 6.5z"/><path d="M18.4 49.5h11.2a5.6 5.6 0 0 1 -11.2 0z"/></g></svg>
<div class="t" style="left:2272.5px;top:1044.86px;font-size:37.5px;color:#fff;font-weight:bold;transform:scaleX(0.94);transform-origin:0 0">G+</div>
<svg style="left:2364px;top:1034px" width="50" height="52" viewBox="0 0 50 52"><path fill="none" stroke="#fff" stroke-width="5.2" stroke-linejoin="round" stroke-linecap="round" d="M9.5 37C6.5 33.5 5 29 5 24 5 12.5 13.5 6.5 24 6.5S43.5 12.5 43.5 24 35 41.5 24 41.5c-2.5 0-4.5-.4-6.5-1.2L6 45z"/></svg>
<div class="t" style="left:2429px;top:1045.87px;font-size:33px;color:#fff;font-weight:bold;letter-spacing:1.6px">Chat</div>
</body></html>
